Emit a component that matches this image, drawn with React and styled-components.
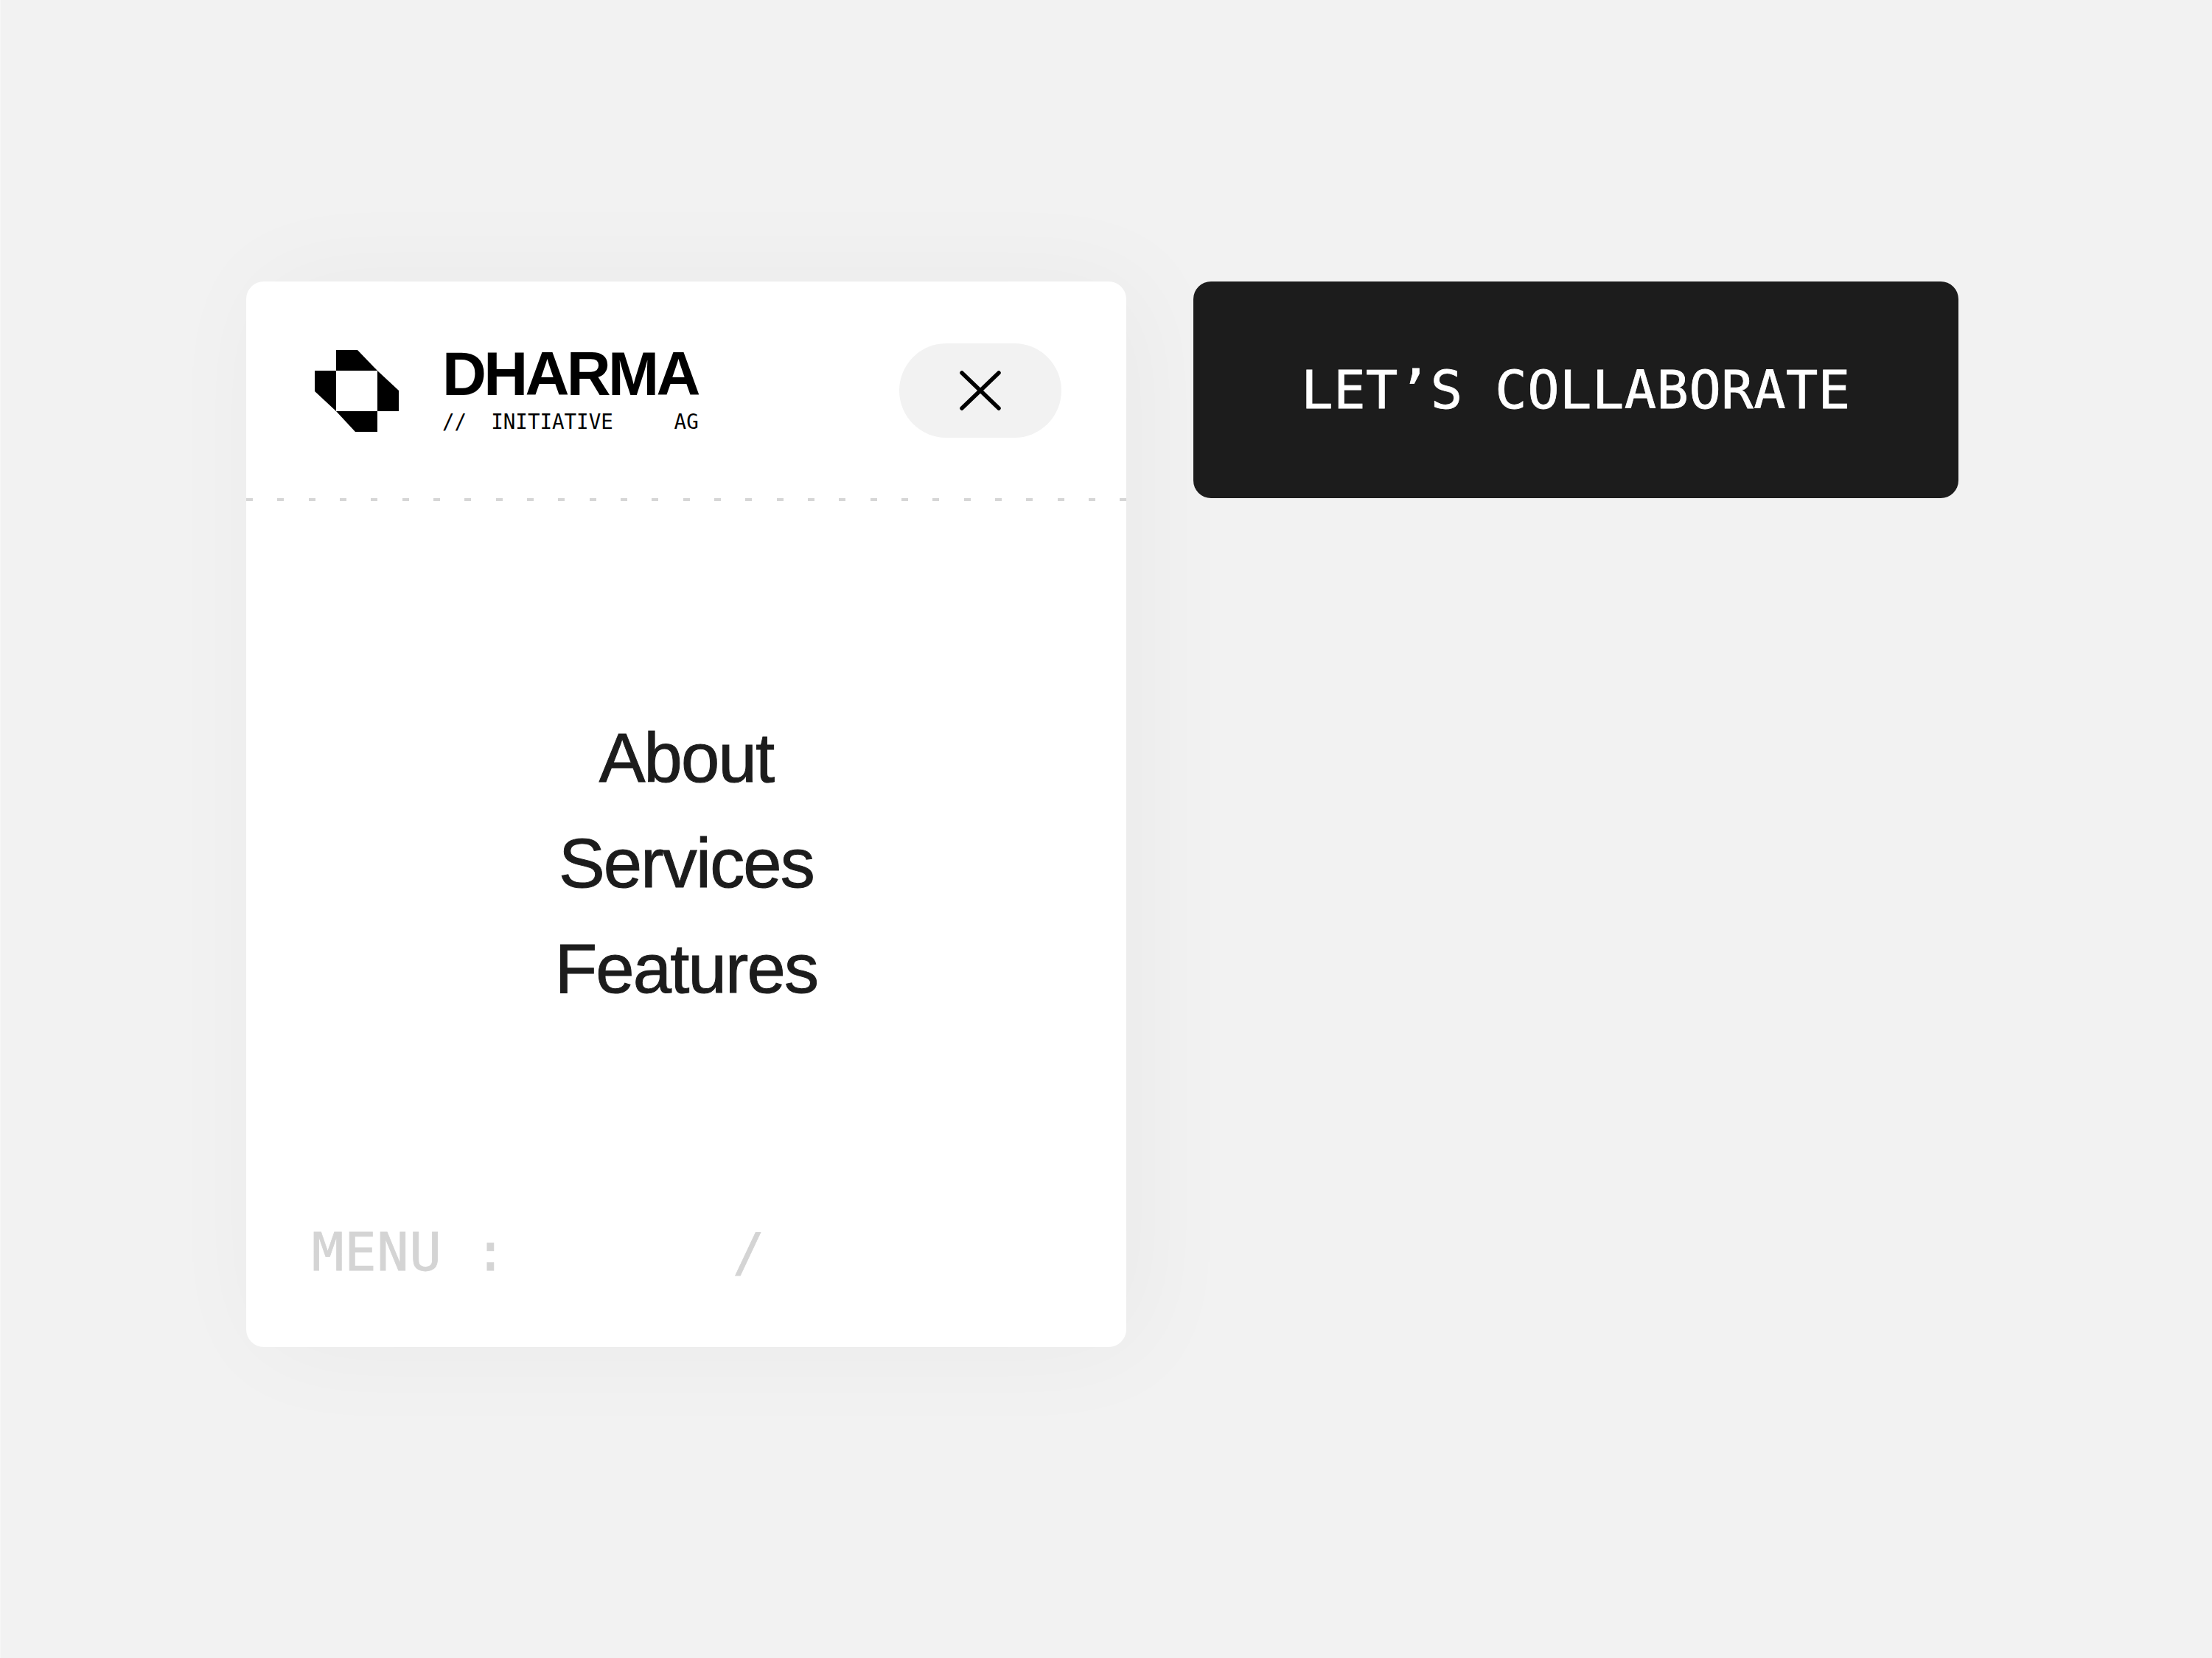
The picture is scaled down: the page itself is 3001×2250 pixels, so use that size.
import React from 'react';
import styled, { createGlobalStyle } from 'styled-components';

const GlobalStyle = createGlobalStyle`
  html, body {
    margin: 0;
    padding: 0;
    background: #f2f2f2;
  }
`;

const Page = styled.div`
  width: 3001px;
  height: 2250px;
  box-sizing: border-box;
  border-left: 1px solid #f6f6f6;
  padding: 382px 0 0 333px;
  display: flex;
  align-items: flex-start;
  gap: 91px;
  overflow: hidden;
`;

const Card = styled.div`
  width: 1194px;
  height: 1446px;
  display: flex;
  flex-direction: column;
  background: #fff;
  border-radius: 24px;
  box-shadow: 20px 0 150px rgba(0, 0, 0, 0.04);
`;

const Header = styled.header`
  height: 294px;
  flex: none;
  box-sizing: border-box;
  padding: 2px 88px 0 93px;
  display: flex;
  align-items: center;
  justify-content: space-between;
`;

const Brand = styled.div`
  display: flex;
  align-items: center;
  gap: 59px;
`;

const LogoMark = styled.svg`
  display: block;
  width: 114px;
  height: 111px;
`;

const BrandText = styled.div`
  display: flex;
  flex-direction: column;
`;

const BrandName = styled.div`
  margin-top: 2px;
  font-family: "Liberation Sans", Arial, sans-serif;
  font-size: 83px;
  font-weight: 700;
  line-height: 66px;
  letter-spacing: -3.7px;
  color: #000;
`;

const BrandSub = styled.div`
  margin-top: 15px;
  font-family: "DejaVu Sans Mono", monospace;
  font-size: 27.5px;
  line-height: 32px;
  white-space: pre;
  color: #000;
`;

const CloseButton = styled.button`
  width: 220px;
  height: 128px;
  border: 0;
  padding: 0;
  border-radius: 64px;
  background: #f2f2f2;
  display: flex;
  align-items: center;
  justify-content: center;
`;

const Divider = styled.div`
  height: 4px;
  flex: none;
  background: repeating-linear-gradient(90deg, #d6d6d6 0 9px, transparent 9px 42.33px);
`;

const Nav = styled.nav`
  padding-top: 277px;
  display: flex;
  flex-direction: column;
  align-items: center;
`;

const NavLink = styled.a`
  font-family: "Liberation Sans", Arial, sans-serif;
  font-size: 94px;
  line-height: 143px;
  letter-spacing: -1.8px;
  color: #1c1c1c;
  -webkit-text-stroke: 1px #1c1c1c;
`;

const Footer = styled.footer`
  margin-top: auto;
  padding: 0 0 87px 89px;
  display: flex;
  font-family: "DejaVu Sans Mono", monospace;
  font-size: 72px;
  letter-spacing: 0.8px;
  color: #d4d4d4;
  -webkit-text-stroke: 0.8px #d4d4d4;
  white-space: pre;
`;

const Slash = styled.span`
  margin-left: 306px;
`;

const CollabButton = styled.button`
  width: 1038px;
  height: 294px;
  border: 0;
  padding: 0;
  border-radius: 24px;
  background: #1c1c1c;
  color: #fff;
  font-family: "DejaVu Sans Mono", monospace;
  font-size: 72px;
  letter-spacing: 0.5px;
  -webkit-text-stroke: 0.8px #fff;
  white-space: pre;
`;

export default function App() {
  return (
    <Page>
      <GlobalStyle />
      <Card>
        <Header>
          <Brand>
            <LogoMark viewBox="427 474 114 111">
              <path fill="#000" d="M456 474H485L512 502H456Z" />
              <path fill="#000" d="M427 502H456V557L427 530Z" />
              <path fill="#000" d="M512 502L541 529V557H512Z" />
              <path fill="#000" d="M456 557H512V585H482Z" />
            </LogoMark>
            <BrandText>
              <BrandName>DHARMA</BrandName>
              <BrandSub>{'//  INITIATIVE     AG'}</BrandSub>
            </BrandText>
          </Brand>
          <CloseButton aria-label="Close">
            <svg width="56" height="54" viewBox="0 0 56 54">
              <path d="M3 3L53 51M53 3L3 51" stroke="#000" strokeWidth="5.5" strokeLinecap="round" fill="none" />
            </svg>
          </CloseButton>
        </Header>
        <Divider />
        <Nav>
          <NavLink>About</NavLink>
          <NavLink>Services</NavLink>
          <NavLink>Features</NavLink>
        </Nav>
        <Footer>
          <span>MENU :</span>
          <Slash>/</Slash>
        </Footer>
      </Card>
      <CollabButton>LET’S COLLABORATE</CollabButton>
    </Page>
  );
}
